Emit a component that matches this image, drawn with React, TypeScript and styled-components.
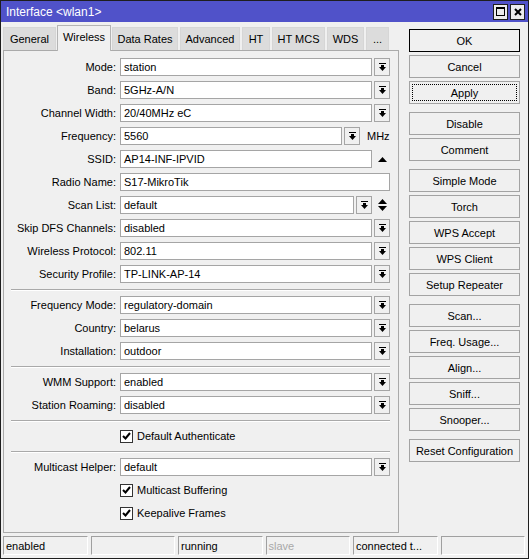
import React from "react";
import styled, { createGlobalStyle } from "styled-components";

const GlobalStyle = createGlobalStyle`
  html, body {
    margin: 0;
    padding: 0;
    background: #fff;
  }
  body {
    font-family: "Liberation Sans", Arial, sans-serif;
    font-size: 11px;
    color: #000;
  }
  * {
    box-sizing: border-box;
  }
`;

const Window = styled.div`
  width: 529px;
  height: 559px;
  border: 1px solid #1e1e1e;
  background: #f0f0f0;
  display: flex;
  flex-direction: column;
`;

const TitleBar = styled.div`
  height: 21px;
  flex: none;
  background: #5052c9;
  color: #fff;
  display: flex;
  align-items: center;
  padding: 0 3px 0 5px;
  font-size: 12px;
`;

const Title = styled.span`
  flex: 1;
`;

const TitleButton = styled.div`
  width: 15px;
  height: 16px;
  margin-left: 2px;
  background: #ececec;
  border: 1px solid #1e1e1e;
  display: flex;
  align-items: center;
  justify-content: center;
`;

const Main = styled.div`
  flex: 1;
  min-height: 0;
  display: flex;
  gap: 10px;
  padding: 3px 8px 0 2px;
`;

const LeftColumn = styled.div`
  width: 396px;
  display: flex;
  flex-direction: column;
`;

const TabStrip = styled.div`
  height: 25px;
  flex: none;
  display: flex;
  align-items: flex-end;
  gap: 2px;
  position: relative;
  z-index: 1;
`;

const Tab = styled.div<{ $active?: boolean; $w: number }>`
  width: ${(p) => p.$w}px;
  flex: none;
  height: ${(p) => (p.$active ? 26 : 23)}px;
  margin: 0 ${(p) => (p.$active ? -1 : 0)}px ${(p) => (p.$active ? -1 : 0)}px;
  padding-bottom: ${(p) => (p.$active ? 3 : 0)}px;
  display: flex;
  align-items: center;
  justify-content: center;
  white-space: nowrap;
  background: ${(p) => (p.$active ? "#f0f0f0" : "#dcdcdc")};
  border: 1px solid ${(p) => (p.$active ? "#b4b4b4" : "#d6d6d6")};
  border-bottom: none;
`;

const Panel = styled.div`
  flex: 1;
  border: 1px solid #aaaaaa;
  background: #f0f0f0;
  padding: 7px 8px 0 0;
  display: flex;
  flex-direction: column;
  gap: 5px;
`;

const Row = styled.div`
  height: 18px;
  display: grid;
  grid-template-columns: 112px 1fr;
  column-gap: 4px;
  align-items: center;
`;

const Label = styled.span`
  text-align: right;
  white-space: nowrap;
`;

const Field = styled.div`
  display: flex;
  align-items: center;
  gap: 2px;
  height: 18px;
  min-width: 0;
`;

const Input = styled.div`
  flex: 1;
  min-width: 0;
  height: 18px;
  border: 1px solid #a5a5a5;
  background: #fff;
  padding: 0 3px;
  line-height: 16px;
  white-space: nowrap;
  overflow: hidden;
`;

const DropButton = styled.div`
  width: 16px;
  height: 18px;
  flex: none;
  border: 1px solid #a5a5a5;
  background: #f0f0f0;
  display: flex;
  align-items: center;
  justify-content: center;
`;

const Glyph = styled.div`
  width: 16px;
  height: 18px;
  flex: none;
  display: flex;
  align-items: center;
  justify-content: center;
`;

const Unit = styled.span`
  padding-left: 5px;
  width: 28px;
`;

const Separator = styled.div`
  height: 2px;
  margin: 1px 0 0 7px;
  border-top: 1px solid #a9a9a9;
  border-bottom: 1px solid #fff;
`;

const CheckLine = styled.label`
  display: flex;
  align-items: center;
  gap: 4px;
  white-space: nowrap;
`;

const Box = styled.span`
  width: 13px;
  height: 13px;
  border: 1px solid #333;
  background: #fff;
  display: flex;
  align-items: center;
  justify-content: center;
`;

const RightColumn = styled.div`
  width: 111px;
  padding-top: 4px;
  display: flex;
  flex-direction: column;
  gap: 8px;
`;

const ButtonGroup = styled.div`
  display: flex;
  flex-direction: column;
  gap: 3px;
`;

const Button = styled.div<{ $default?: boolean; $focused?: boolean }>`
  height: 23px;
  border: 1px solid ${(p) => (p.$default ? "#000" : "#a3a3a3")};
  background: #f0f0f0;
  display: flex;
  align-items: center;
  justify-content: center;
  white-space: nowrap;
  outline: ${(p) => (p.$focused ? "1px dotted #000" : "none")};
  outline-offset: -4px;
`;

const StatusBar = styled.div`
  height: 25px;
  flex: none;
  display: flex;
  gap: 3px;
  padding: 3px 3px 3px 2px;
`;

const StatusCell = styled.div<{ $dim?: boolean }>`
  flex: 1;
  min-width: 0;
  border: 1px solid;
  border-color: #a0a0a0 #fff #fff #a0a0a0;
  padding-left: 2px;
  display: flex;
  align-items: center;
  white-space: nowrap;
  overflow: hidden;
  color: ${(p) => (p.$dim ? "#a8a8a8" : "#000")};
`;

const DropIcon = () => (
  <svg width="7" height="9" viewBox="0 0 7 9">
    <rect x="0" y="0" width="7" height="1" fill="#000" />
    <rect x="2" y="2" width="3" height="2" fill="#000" />
    <polygon points="0,4 7,4 3.5,8" fill="#000" />
  </svg>
);

const UpIcon = () => (
  <svg width="9" height="5" viewBox="0 0 9 5">
    <polygon points="0,5 9,5 4.5,0" fill="#000" />
  </svg>
);

const UpDownIcon = () => (
  <svg width="9" height="12" viewBox="0 0 9 12">
    <polygon points="0,5 9,5 4.5,0" fill="#000" />
    <polygon points="0,7 9,7 4.5,12" fill="#000" />
  </svg>
);

const CheckIcon = () => (
  <svg width="9" height="8" viewBox="0 0 9 8">
    <polyline points="1,4 3.5,6.5 8,1" fill="none" stroke="#000" strokeWidth="2" />
  </svg>
);

const MaxIcon = () => (
  <svg width="9" height="9" viewBox="0 0 9 9">
    <rect x="0.5" y="0.5" width="8" height="8" fill="none" stroke="#000" />
    <rect x="0" y="0" width="9" height="2" fill="#000" />
  </svg>
);

const CloseIcon = () => (
  <svg width="8" height="8" viewBox="0 0 8 8">
    <path d="M1 1 L7 7 M7 1 L1 7" stroke="#000" strokeWidth="2" />
  </svg>
);

type Extra = "drop" | "none" | "up" | "mhz" | "scan";

const SelectRow = ({ label, value, extra = "drop" }: { label: string; value: string; extra?: Extra }) => (
  <Row>
    <Label>{label}:</Label>
    <Field>
      <Input>{value}</Input>
      {(extra === "drop" || extra === "mhz" || extra === "scan") && (
        <DropButton>
          <DropIcon />
        </DropButton>
      )}
      {extra === "mhz" && <Unit>MHz</Unit>}
      {extra === "up" && (
        <Glyph>
          <UpIcon />
        </Glyph>
      )}
      {extra === "scan" && (
        <Glyph>
          <UpDownIcon />
        </Glyph>
      )}
    </Field>
  </Row>
);

const CheckRow = ({ text }: { text: string }) => (
  <Row>
    <span />
    <CheckLine>
      <Box>
        <CheckIcon />
      </Box>
      {text}
    </CheckLine>
  </Row>
);

const tabs = [
  { label: "General", w: 53 },
  { label: "Wireless", w: 54 },
  { label: "Data Rates", w: 66 },
  { label: "Advanced", w: 60 },
  { label: "HT", w: 28 },
  { label: "HT MCS", w: 53 },
  { label: "WDS", w: 37 },
  { label: "...", w: 23 },
];

const buttonGroups = [
  ["OK", "Cancel", "Apply"],
  ["Disable", "Comment"],
  ["Simple Mode", "Torch", "WPS Accept", "WPS Client", "Setup Repeater"],
  ["Scan...", "Freq. Usage...", "Align...", "Sniff...", "Snooper..."],
  ["Reset Configuration"],
];

const status = [
  { text: "enabled" },
  { text: "" },
  { text: "running" },
  { text: "slave", dim: true },
  { text: "connected t..." },
  { text: "" },
];

export default function App() {
  return (
    <>
      <GlobalStyle />
      <Window>
        <TitleBar>
          <Title>Interface &lt;wlan1&gt;</Title>
          <TitleButton>
            <MaxIcon />
          </TitleButton>
          <TitleButton>
            <CloseIcon />
          </TitleButton>
        </TitleBar>
        <Main>
          <LeftColumn>
            <TabStrip>
              {tabs.map((t) => (
                <Tab key={t.label} $w={t.w} $active={t.label === "Wireless"}>
                  {t.label}
                </Tab>
              ))}
            </TabStrip>
            <Panel>
              <SelectRow label="Mode" value="station" />
              <SelectRow label="Band" value="5GHz-A/N" />
              <SelectRow label="Channel Width" value="20/40MHz eC" />
              <SelectRow label="Frequency" value="5560" extra="mhz" />
              <SelectRow label="SSID" value="AP14-INF-IPVID" extra="up" />
              <SelectRow label="Radio Name" value="S17-MikroTik" extra="none" />
              <SelectRow label="Scan List" value="default" extra="scan" />
              <SelectRow label="Skip DFS Channels" value="disabled" />
              <SelectRow label="Wireless Protocol" value="802.11" />
              <SelectRow label="Security Profile" value="TP-LINK-AP-14" />
              <Separator />
              <SelectRow label="Frequency Mode" value="regulatory-domain" />
              <SelectRow label="Country" value="belarus" />
              <SelectRow label="Installation" value="outdoor" />
              <Separator />
              <SelectRow label="WMM Support" value="enabled" />
              <SelectRow label="Station Roaming" value="disabled" />
              <Separator />
              <CheckRow text="Default Authenticate" />
              <Separator />
              <SelectRow label="Multicast Helper" value="default" />
              <CheckRow text="Multicast Buffering" />
              <CheckRow text="Keepalive Frames" />
            </Panel>
          </LeftColumn>
          <RightColumn>
            {buttonGroups.map((g, i) => (
              <ButtonGroup key={i}>
                {g.map((b) => (
                  <Button key={b} $default={b === "OK"} $focused={b === "Apply"}>
                    {b}
                  </Button>
                ))}
              </ButtonGroup>
            ))}
          </RightColumn>
        </Main>
        <StatusBar>
          {status.map((s, i) => (
            <StatusCell key={i} $dim={s.dim}>
              {s.text}
            </StatusCell>
          ))}
        </StatusBar>
      </Window>
    </>
  );
}
